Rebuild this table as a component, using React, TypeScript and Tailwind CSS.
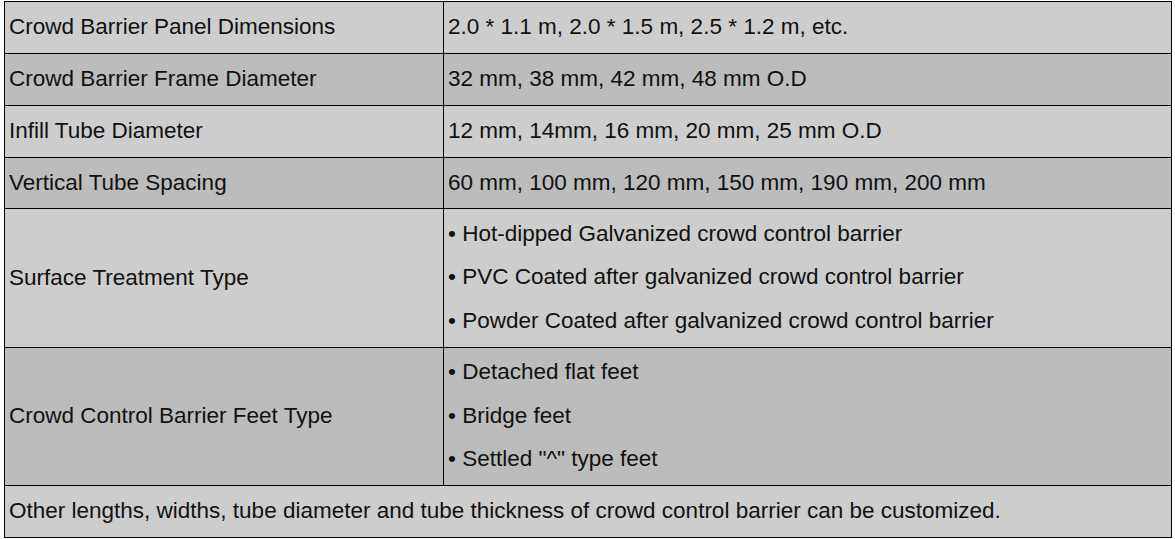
import React from "react";

const rows: { label: string; value: string | string[]; dark: boolean; h: string }[] = [
  { label: "Crowd Barrier Panel Dimensions", value: "2.0 * 1.1 m, 2.0 * 1.5 m, 2.5 * 1.2 m, etc.", dark: false, h: "h-[52px]" },
  { label: "Crowd Barrier Frame Diameter", value: "32 mm, 38 mm, 42 mm, 48 mm O.D", dark: true, h: "h-[52px]" },
  { label: "Infill Tube Diameter", value: "12 mm, 14mm, 16 mm, 20 mm, 25 mm O.D", dark: false, h: "h-[52px]" },
  { label: "Vertical Tube Spacing", value: "60 mm, 100 mm, 120 mm, 150 mm, 190 mm, 200 mm", dark: true, h: "h-[51px]" },
  {
    label: "Surface Treatment Type",
    value: [
      "Hot-dipped Galvanized crowd control barrier",
      "PVC Coated after galvanized crowd control barrier",
      "Powder Coated after galvanized crowd control barrier",
    ],
    dark: false,
    h: "h-[139px]",
  },
  {
    label: "Crowd Control Barrier Feet Type",
    value: ["Detached flat feet", "Bridge feet", 'Settled "^" type feet'],
    dark: true,
    h: "h-[138px]",
  },
];

export default function App() {
  return (
    <div className="w-[1175px] h-[539px] bg-white pl-[4px] pt-[1px]" style={{ fontFamily: '"Liberation Sans", Arial, sans-serif' }}>
      <table className="w-[1168px] border-collapse border border-black text-[22.5px] text-[#111] leading-[26px]">
        <tbody>
          {rows.map((r, i) => (
            <tr key={i} className={`${r.h} ${r.dark ? "bg-[#bcbcbc]" : "bg-[#cdcdcd]"}`}>
              <td className="w-[439px] border border-black pl-[4px] pb-[1px] align-middle">{r.label}</td>
              <td className="border border-black pl-[4px] pb-[1px] align-middle">
                {Array.isArray(r.value) ? (
                  <div className="flex flex-col gap-[17.5px] pb-[1px]">
                    {r.value.map((v, j) => (
                      <div key={j}>• {v}</div>
                    ))}
                  </div>
                ) : (
                  r.value
                )}
              </td>
            </tr>
          ))}
          <tr className="h-[52px] bg-[#cdcdcd]">
            <td colSpan={2} className="border border-black pl-[4px] pb-[1px] align-middle">
              Other lengths, widths, tube diameter and tube thickness of crowd control barrier can be customized.
            </td>
          </tr>
        </tbody>
      </table>
    </div>
  );
}
